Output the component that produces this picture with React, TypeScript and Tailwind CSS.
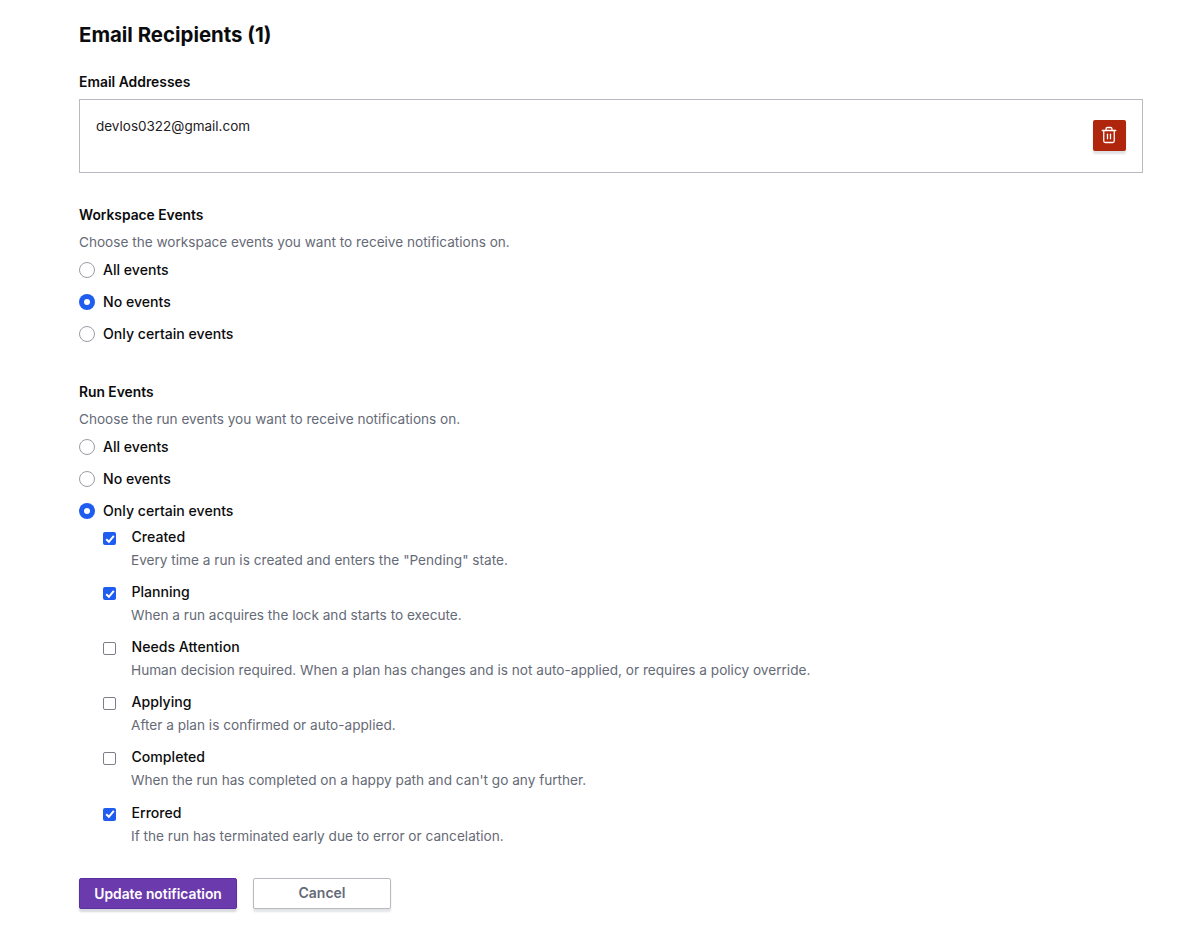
import React from "react";
import { Trash2 } from "lucide-react";

const workspaceOptions = [
  { label: "All events", checked: false },
  { label: "No events", checked: true },
  { label: "Only certain events", checked: false },
];

const runOptions = [
  { label: "All events", checked: false },
  { label: "No events", checked: false },
  { label: "Only certain events", checked: true },
];

const runEvents = [
  { label: "Created", checked: true, text: 'Every time a run is created and enters the "Pending" state.' },
  { label: "Planning", checked: true, text: "When a run acquires the lock and starts to execute." },
  { label: "Needs Attention", checked: false, text: "Human decision required. When a plan has changes and is not auto-applied, or requires a policy override." },
  { label: "Applying", checked: false, text: "After a plan is confirmed or auto-applied." },
  { label: "Completed", checked: false, text: "When the run has completed on a happy path and can't go any further." },
  { label: "Errored", checked: true, text: "If the run has terminated early due to error or cancelation." },
];

const Radio = ({ label, checked }: { label: string; checked: boolean }) => (
  <label className="flex h-8 items-center gap-2">
    {checked ? (
      <span className="flex h-4 w-4 items-center justify-center rounded-full bg-[#1f5cf0]">
        <span className="h-[6px] w-[6px] rounded-full bg-white" />
      </span>
    ) : (
      <span className="h-4 w-4 rounded-full border border-[#9a9ca6] bg-white" />
    )}
    <span className="text-[14.1px] font-medium leading-5 text-[#0c0c0e]">{label}</span>
  </label>
);

const Checkbox = ({ checked }: { checked: boolean }) =>
  checked ? (
    <span className="mt-[5px] flex h-[13px] w-[13px] items-center justify-center rounded-[2px] bg-[#1f5cf0]">
      <svg width="10" height="10" viewBox="0 0 10 10" fill="none" stroke="white" strokeWidth="2">
        <path d="M1.2 5.2 3.9 7.8 8.8 1.8" />
      </svg>
    </span>
  ) : (
    <span className="mt-[5px] h-[13px] w-[13px] rounded-[2px] border border-[#7c7e88] bg-white" />
  );

const Section = ({
  title,
  description,
  options,
}: {
  title: string;
  description: string;
  options: { label: string; checked: boolean }[];
}) => (
  <div>
    <h3 className="text-[13.8px] font-semibold leading-5 text-[#0c0c0e]">{title}</h3>
    <p className="mt-[7px] text-[13.6px] leading-5 text-[#656a76]">{description}</p>
    <div className="mt-[2px] flex flex-col">
      {options.map((o) => (
        <Radio key={o.label} label={o.label} checked={o.checked} />
      ))}
    </div>
  </div>
);

export default function App() {
  return (
    <div className="h-[925px] overflow-hidden bg-white pl-[79px] pr-[54px] pt-[21px] font-['Inter',sans-serif]">
      <h2 className="text-[20.4px] font-bold leading-7 text-[#0c0c0e]">Email Recipients (1)</h2>

      <div className="mt-[23px] text-[13.9px] font-semibold leading-5 text-[#0c0c0e]">Email Addresses</div>
      <div className="mt-[7px] flex h-[74px] items-start justify-between border border-[#b9bac1] pl-4 pr-4 pt-4">
        <span className="text-[13.5px] leading-5 text-[#1f2024]">devlos0322@gmail.com</span>
        <button className="mt-1 flex h-[31px] w-[33px] items-center justify-center rounded-[2px] bg-[#b0260c] pb-[2px] pr-[1px] text-white shadow-[0_3px_2px_rgba(101,106,118,0.2)]">
          <Trash2 size={18} strokeWidth={1.7} />
        </button>
      </div>

      <div className="mt-[32px]">
        <Section
          title="Workspace Events"
          description="Choose the workspace events you want to receive notifications on."
          options={workspaceOptions}
        />
      </div>

      <div className="mt-[32px]">
        <Section
          title="Run Events"
          description="Choose the run events you want to receive notifications on."
          options={runOptions}
        />
        <div className="ml-6 flex flex-col">
          {runEvents.map((e) => (
            <div key={e.label} className="flex h-[55.12px] items-start gap-[15.5px]">
              <Checkbox checked={e.checked} />
              <div>
                <div className="text-[14.1px] font-medium leading-5 text-[#0c0c0e]">{e.label}</div>
                <div className="mt-[3px] -ml-[0.5px] text-[13.63px] leading-5 text-[#656a76]">{e.text}</div>
              </div>
            </div>
          ))}
        </div>
      </div>

      <div className="mt-[20.3px] flex gap-4">
        <button className="h-[31px] w-[158px] rounded-[2px] border border-[#5a2f9e] bg-[#6b3aad] pt-px text-[13.8px] font-semibold text-white shadow-[0_3px_2px_rgba(101,106,118,0.25)]">
          Update notification
        </button>
        <button className="h-[31px] w-[138px] rounded-[2px] border border-[#b9bac1] bg-white text-sm font-semibold text-[#656a76] shadow-[0_3px_2px_rgba(101,106,118,0.18)]">
          Cancel
        </button>
      </div>
    </div>
  );
}
